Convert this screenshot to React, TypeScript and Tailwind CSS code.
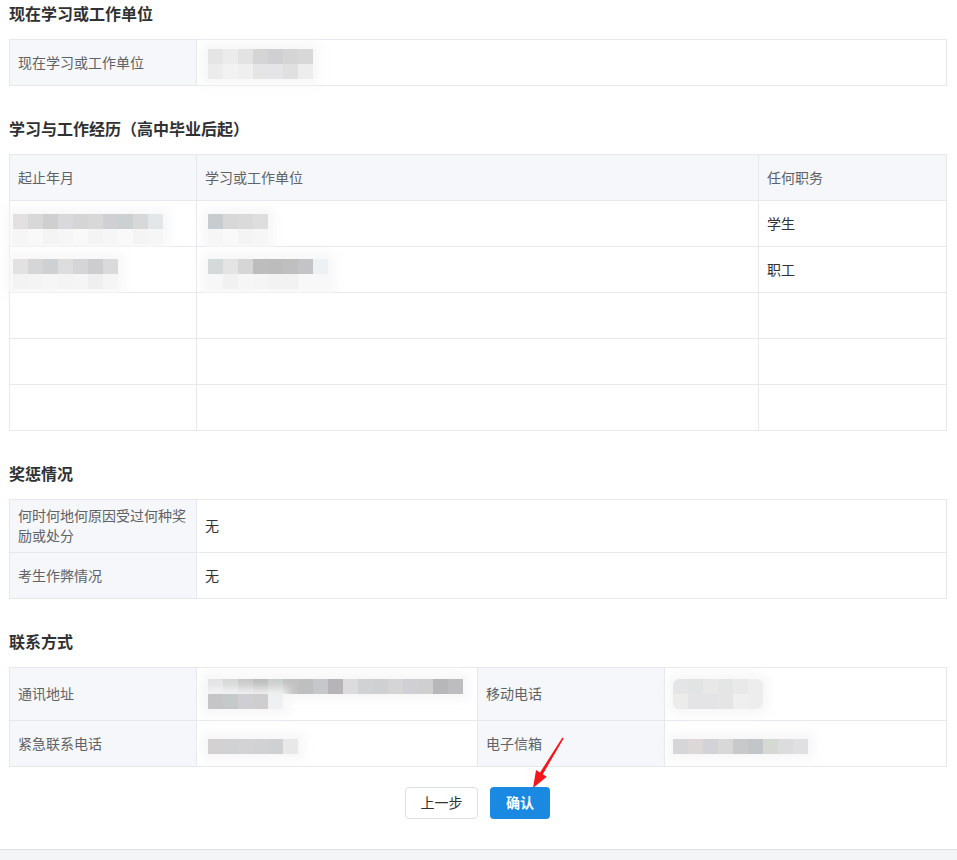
import type { ReactNode } from 'react'
import clsx from 'clsx'

const border = 'border-r border-b border-[#e6e8eb]'
const labelCls = clsx(border, 'bg-[#f5f7fa] text-[#5f6266] px-2 pb-[2px] flex items-center')
const valueCls = clsx(border, 'bg-white text-[#303133] px-2 pb-[2px] flex items-center')
const blurCls = clsx(border, 'bg-white flex items-start')

function Heading({ children, first }: { children: ReactNode; first?: boolean }) {
  return (
    <h2
      className={clsx(
        'pl-[9px] text-[16px] leading-[20px] font-bold text-[#303133] mb-[16px]',
        first ? 'mt-0' : 'mt-[32px]'
      )}
    >
      {children}
    </h2>
  )
}

function Mosaic({ rows, className }: { rows: string[][]; className?: string }) {
  return (
    <div className={clsx('flex flex-col shadow-[0_0_10px_6px_rgba(246,246,246,0.9)]', className)}>
      {rows.map((row, i) => (
        <div key={i} className="flex">
          {row.map((c, j) => (
            <div key={j} className="h-[15px] w-[15px]" style={{ backgroundColor: c }} />
          ))}
        </div>
      ))}
    </div>
  )
}

const light = (n: number) => Array.from({ length: n }, (_, i) => (i % 3 === 0 ? '#f6f6f6' : i % 3 === 1 ? '#f9f9f9' : '#f4f4f4'))

function Arrow() {
  return (
    <svg className="absolute left-[525px] top-[735px]" width="45" height="56" viewBox="0 0 45 56">
      <polygon
        points="38.6,3.4 17.8,39.3 21.8,41.8 8,53 11,35 15,37.5 37.4,2.6"
        fill="#f5161b"
      />
    </svg>
  )
}

export default function App() {
  return (
    <div
      className="relative bg-white pt-[3px] text-[14px] leading-[20px]"
      style={{ fontFamily: '"Noto Sans CJK SC", "Noto Sans", sans-serif' }}
    >
      <Heading first>现在学习或工作单位</Heading>
      <div className="ml-[9px] w-[938px] border-t border-l border-[#e6e8eb] grid grid-cols-[187px_750px]">
        <div className={clsx(labelCls, 'h-[46px]')}>现在学习或工作单位</div>
        <div className={clsx(blurCls, 'h-[46px] pt-[9px] pl-[11px]')}>
          <Mosaic
            rows={[
              ['#e5e5e5', '#ececec', '#e3e3e3', '#d5d5d5', '#d0d0d3', '#d5d5d5', '#d8d8d8'],
              ['#ececec', '#f2f2f2', '#efefef', '#e5e5e5', '#e5e5e7', '#e0e0e0', '#ededed'],
            ]}
          />
        </div>
      </div>

      <Heading>学习与工作经历（高中毕业后起）</Heading>
      <div className="ml-[9px] w-[938px] border-t border-l border-[#e6e8eb] grid grid-cols-[187px_562px_188px]">
        <div className={clsx(labelCls, 'h-[46px]')}>起止年月</div>
        <div className={clsx(labelCls, 'h-[46px]')}>学习或工作单位</div>
        <div className={clsx(labelCls, 'h-[46px]')}>任何职务</div>

        <div className={clsx(blurCls, 'h-[46px] pt-[13px] pl-[3px]')}>
          <Mosaic
            rows={[
              ['#e2e0e0', '#d8d8d8', '#cfcfcf', '#d9d9db', '#d5d5d6', '#d8d8d8', '#d0cfd3', '#cdd0d0', '#d8d8d8', '#e4e7ea'],
              light(10),
            ]}
          />
        </div>
        <div className={clsx(blurCls, 'h-[46px] pt-[13px] pl-[11px]')}>
          <Mosaic rows={[['#c9ccce', '#d8d8d8', '#dadada', '#dedede'], light(4)]} />
        </div>
        <div className={clsx(valueCls, 'h-[46px]')}>学生</div>

        <div className={clsx(blurCls, 'h-[46px] pt-[12px] pl-[3px]')}>
          <Mosaic
            rows={[
              ['#e3e1e1', '#d5d6d6', '#cfd0d1', '#dcdddc', '#d5d5d7', '#cdcdd0', '#dadada'],
              ['#f3f3f3', '#f4f4f4', '#f6f6f6', '#f4f4f4', '#f5f5f5', '#eeefee', '#f5f5f5'],
            ]}
          />
        </div>
        <div className={clsx(blurCls, 'h-[46px] pt-[12px] pl-[11px]')}>
          <Mosaic
            rows={[
              ['#d5d9d9', '#e4e4e4', '#d6d6d6', '#bdbdbd', '#bcbcbd', '#bfbfc0', '#c4c4c6', '#eef1f4'],
              ['#f7f7f7', '#f0f1f0', '#f6f6f6', '#f5f5f5', '#f2f2f2', '#f2f2f2', '#f8f8f8', '#f8f8f8'],
            ]}
          />
        </div>
        <div className={clsx(valueCls, 'h-[46px]')}>职工</div>

        {[0, 1, 2].map((i) => (
          <div key={i} className="contents">
            <div className={clsx(valueCls, 'h-[46px]')} />
            <div className={clsx(valueCls, 'h-[46px]')} />
            <div className={clsx(valueCls, 'h-[46px]')} />
          </div>
        ))}
      </div>

      <Heading>奖惩情况</Heading>
      <div className="ml-[9px] w-[938px] border-t border-l border-[#e6e8eb] grid grid-cols-[187px_750px]">
        <div className={clsx(labelCls, 'h-[53px]')}>何时何地何原因受过何种奖励或处分</div>
        <div className={clsx(valueCls, 'h-[53px]')}>无</div>
        <div className={clsx(labelCls, 'h-[46px]')}>考生作弊情况</div>
        <div className={clsx(valueCls, 'h-[46px]')}>无</div>
      </div>

      <Heading>联系方式</Heading>
      <div className="ml-[9px] w-[938px] border-t border-l border-[#e6e8eb] grid grid-cols-[187px_281px_187px_282px]">
        <div className={clsx(labelCls, 'h-[53px]')}>通讯地址</div>
        <div className={clsx(blurCls, 'h-[53px] pt-[11px] pl-[11px]')}>
          <div className="flex flex-col items-start">
            <Mosaic
              rows={[
                ['#e2e3e4', '#d5d8d7', '#c8c8c8', '#bcbcbc', '#c9cdcc', '#c2c2c2', '#c0bfc0', '#c6c7ca', '#b6b4b6', '#dcdcdc', '#d1d2d3', '#cfd0d1', '#d6d4d4', '#cfd0d4', '#d0cfd0', '#b7b7b9', '#bdbcbf'],
              ]}
            />
            <Mosaic rows={[['#c5c5c7', '#c6c9ca', '#cfcfd3', '#cfcdcd', '#eff0f1']]} />
          </div>
        </div>
        <div className={clsx(labelCls, 'h-[53px]')}>移动电话</div>
        <div className={clsx(blurCls, 'h-[53px] pt-[11px] pl-[8px]')}>
          <Mosaic
            className="rounded-[6px] overflow-hidden"
            rows={[
              ['#e4e5e7', '#e2e3e3', '#e8e8e8', '#e4e5e5', '#e9e9e9', '#ededed'],
              ['#ececea', '#e4e4e6', '#e4e4e6', '#e5e5e5', '#efefef', '#ededed'],
            ]}
          />
        </div>

        <div className={clsx(labelCls, 'h-[46px]')}>紧急联系电话</div>
        <div className={clsx(blurCls, 'h-[46px] pt-[18px] pl-[11px]')}>
          <Mosaic rows={[['#d3d1d2', '#d1d2d3', '#d3d3d5', '#d0d2d3', '#cfd0d1', '#e8e8e8']]} />
        </div>
        <div className={clsx(labelCls, 'h-[46px]')}>电子信箱</div>
        <div className={clsx(blurCls, 'h-[46px] pt-[18px] pl-[8px]')}>
          <Mosaic rows={[['#d6d6d8', '#dcd8d7', '#d3d3d7', '#d8d8d9', '#c9c9c9', '#c3c6c9', '#d6d8d4', '#dcdcde', '#e0e0e2']]} />
        </div>
      </div>

      <div className="mt-[20px] flex justify-center gap-[12px] pr-[2px]">
        <button className="h-[32px] w-[73px] rounded-[4px] border border-[#dcdfe6] bg-white pb-[2px] text-[14px] text-[#303133]">
          上一步
        </button>
        <button className="h-[32px] w-[60px] rounded-[4px] bg-[#1a89e2] pb-[2px] text-[14px] font-semibold text-white">
          确认
        </button>
      </div>

      <div className="mt-[30px] h-[40px] border-t border-[#dcdfe6] bg-[#f4f5f7]" />

      <Arrow />
    </div>
  )
}
